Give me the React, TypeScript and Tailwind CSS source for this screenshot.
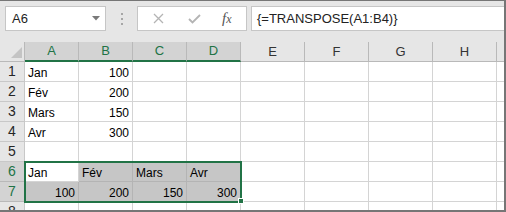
import React from "react";

type Col = { label: string; width: string; selected: boolean };

const columns: Col[] = [
  { label: "A", width: "w-[54px]", selected: true },
  { label: "B", width: "w-[54px]", selected: true },
  { label: "C", width: "w-[54px]", selected: true },
  { label: "D", width: "w-[54px]", selected: true },
  { label: "E", width: "w-[64px]", selected: false },
  { label: "F", width: "w-[64px]", selected: false },
  { label: "G", width: "w-[64px]", selected: false },
  { label: "H", width: "w-[64px]", selected: false },
];

// cell text per row, [text, right aligned]
const rows: { n: number; cells: [string, boolean][] }[] = [
  { n: 1, cells: [["Jan", false], ["100", true]] },
  { n: 2, cells: [["Fév", false], ["200", true]] },
  { n: 3, cells: [["Mars", false], ["150", true]] },
  { n: 4, cells: [["Avr", false], ["300", true]] },
  { n: 5, cells: [] },
  { n: 6, cells: [["Jan", false], ["Fév", false], ["Mars", false], ["Avr", false]] },
  { n: 7, cells: [["100", true], ["200", true], ["150", true], ["300", true]] },
  { n: 8, cells: [] },
];

const FormulaBar = () => (
  <div className="flex h-[41px] pt-[5px] pl-[5px]">
    <div className="flex h-[25px] w-[101px] items-center justify-between border border-[#c6c6c6] bg-white pl-[6px] pr-[5px] text-[13px] text-[#222]">
      <span>A6</span>
      <svg width="8" height="5" viewBox="0 0 8 5">
        <path d="M0 0 H8 L4 4.5 Z" fill="#7a7a7a" />
      </svg>
    </div>
    <div className="flex h-[25px] w-[31px] flex-col items-center justify-center gap-[3px]">
      <span className="h-[2px] w-[2px] bg-[#a6a6a6]" />
      <span className="h-[2px] w-[2px] bg-[#a6a6a6]" />
      <span className="h-[2px] w-[2px] bg-[#a6a6a6]" />
    </div>
    <div className="flex h-[25px] w-[110px] items-center border border-[#c6c6c6] bg-white">
      <svg className="ml-[15px]" width="11" height="11" viewBox="0 0 11 11">
        <path d="M1 1 L10 10 M10 1 L1 10" stroke="#b4b4b4" strokeWidth="1.3" />
      </svg>
      <svg className="ml-[24px]" width="13" height="10" viewBox="0 0 13 10">
        <path d="M1 5 L4.5 8.5 L12 1" stroke="#b4b4b4" strokeWidth="1.8" fill="none" />
      </svg>
      <span className="ml-[21px] font-['Liberation_Serif'] text-[15px] italic text-[#555]">
        f<span className="text-[12px]">x</span>
      </span>
    </div>
    <div className="ml-[4px] flex h-[25px] flex-1 items-center border-y border-l border-[#c6c6c6] bg-white pl-[5px] text-[13px] text-[#222]">
      {"{=TRANSPOSE(A1:B4)}"}
    </div>
  </div>
);

const HeaderRow = () => (
  <div className="flex h-[20px]">
    <div className="relative h-[20px] w-[25px] border-r border-b border-[#b9b9b9] bg-[#e6e6e6]">
      <svg className="absolute right-[2px] bottom-[3px]" width="11" height="11" viewBox="0 0 11 11">
        <path d="M11 0 V11 H0 Z" fill="#c4c4c4" />
      </svg>
    </div>
    {columns.map((c) => (
      <div
        key={c.label}
        className={
          c.selected
            ? `${c.width} flex h-[20px] items-center justify-center border-r border-b-2 border-r-[#b9b9b9] border-b-[#217346] bg-[#d3d3d3] pb-[1px] text-[13px] text-[#217346]`
            : `${c.width} flex h-[20px] items-center justify-center border-r border-b border-[#b9b9b9] bg-[#e6e6e6] text-[13px] text-[#333]`
        }
      >
        {c.label}
      </div>
    ))}
    <div className="h-[20px] flex-1 border-b border-[#b9b9b9] bg-[#e6e6e6]" />
  </div>
);

export default function App() {
  return (
    <div className="h-[212px] w-[506px] overflow-hidden border-t border-r-2 border-b-2 border-[#767676] bg-[#e6e6e6] font-['Liberation_Sans',sans-serif]">
      <FormulaBar />
      <div className="relative">
        <HeaderRow />
        {rows.map((r) => {
          const rowSel = r.n === 6 || r.n === 7;
          return (
            <div key={r.n} className="flex h-[20px]">
              <div
                className={
                  rowSel
                    ? "flex h-[20px] w-[25px] items-center justify-center border-r border-b border-[#b9b9b9] bg-[#d3d3d3] text-[14px] text-[#217346]"
                    : "flex h-[20px] w-[25px] items-center justify-center border-r border-b border-[#c8c8c8] bg-[#e6e6e6] text-[14px] text-[#262626]"
                }
              >
                {r.n}
              </div>
              {columns.map((c, i) => {
                const cell = r.cells[i];
                const shaded = rowSel && c.selected && !(r.n === 6 && i === 0);
                return (
                  <div
                    key={c.label}
                    className={`${c.width} flex h-[20px] items-end border-r border-b px-[3px] pb-[1px] text-[12px] leading-[13px] text-black ${
                      shaded ? "border-[#b4b4b4] bg-[#c6c6c6]" : "border-[#d4d4d4] bg-white"
                    } ${cell && cell[1] ? "justify-end" : "justify-start"}`}
                  >
                    {cell ? cell[0] : ""}
                  </div>
                );
              })}
              <div className="h-[20px] flex-1 border-b border-[#d4d4d4] bg-white" />
            </div>
          );
        })}
        {/* selection A6:D7 */}
        <div className="absolute top-[119px] left-[24px] h-[42px] w-[218px] border-2 border-[#217346]" />
        <div className="absolute top-[156px] left-[238px] h-[6px] w-[6px] border border-white bg-[#217346]" />
      </div>
    </div>
  );
}
